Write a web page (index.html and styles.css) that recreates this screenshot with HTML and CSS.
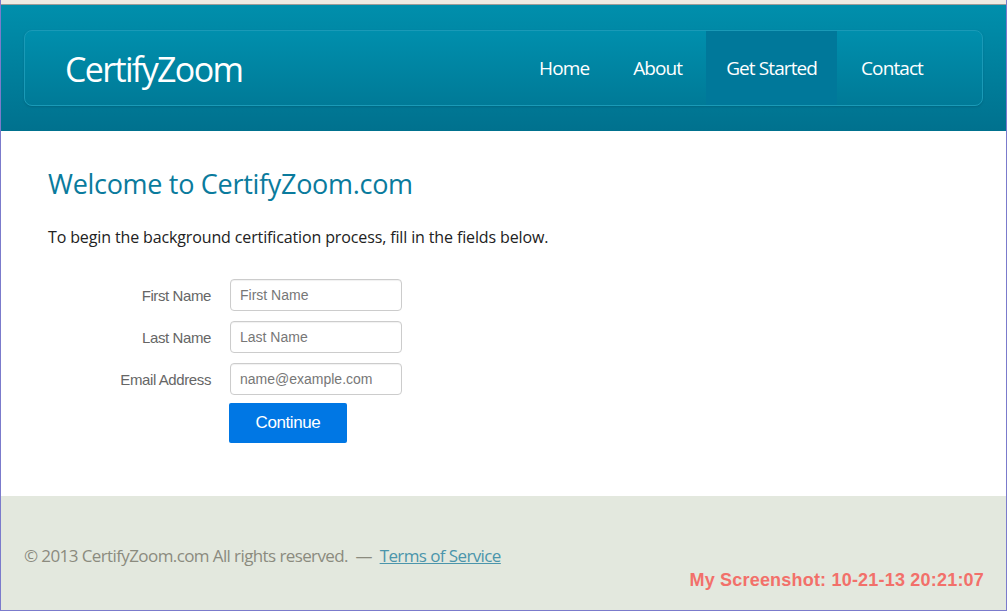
FILE: index.html
```html
<!DOCTYPE html>
<html>
<head>
<meta charset="utf-8">
<link rel="stylesheet" href="styles.css">
</head>
<body>
<div class="frame">
  <div class="topstrip"></div>
  <header class="header">
    <nav class="navbar">
      <div class="logo">CertifyZoom</div>
      <ul class="menu">
        <li><a href="#">Home</a></li>
        <li><a href="#">About</a></li>
        <li class="active"><a href="#">Get Started</a></li>
        <li><a href="#">Contact</a></li>
      </ul>
    </nav>
  </header>
  <main class="main">
    <h1 class="title">Welcome to CertifyZoom.com</h1>
    <p class="intro">To begin the background certification process, fill in the fields below.</p>
    <form class="form">
      <div class="row">
        <label class="label">First Name</label>
        <input class="field" type="text" placeholder="First Name">
      </div>
      <div class="row">
        <label class="label">Last Name</label>
        <input class="field" type="text" placeholder="Last Name">
      </div>
      <div class="row">
        <label class="label">Email Address</label>
        <input class="field" type="text" placeholder="name@example.com">
      </div>
      <div class="row">
        <span class="label"></span>
        <button class="btn" type="button">Continue</button>
      </div>
    </form>
  </main>
  <footer class="footer">
    <p class="copy">© 2013 CertifyZoom.com All rights reserved. &nbsp;—&nbsp; <a href="#">Terms of Service</a></p>
    <div class="stamp">My Screenshot: 10-21-13 20:21:07</div>
  </footer>
</div>
</body>
</html>
```
FILE: styles.css
```css
* { box-sizing: border-box; }
html, body { margin: 0; padding: 0; }
body { font-family: "Open Sans", "DejaVu Sans", sans-serif; background: #fff; }

.frame {
  width: 1007px;
  height: 611px;
  display: flex;
  flex-direction: column;
  border-left: 1px solid #7b7bcc;
  border-right: 1px solid #7b7bcc;
  border-bottom: 1px solid #7b7bcc;
  overflow: hidden;
}

.topstrip {
  height: 5px;
  flex: none;
  background: #eeebe3;
  border-bottom: 1px solid #9c9c98;
}

.header {
  flex: none;
  height: 126px;
  padding: 25px 23px;
  background: linear-gradient(#008fac, #00718e);
}

.navbar {
  height: 76px;
  display: flex;
  align-items: stretch;
  justify-content: space-between;
  border: 1px solid #1a9ab7;
  border-radius: 8px;
  background: linear-gradient(#008fad, #007a97);
  padding-left: 40px;
  padding-right: 39px;
  box-shadow: 0 1px 2px rgba(0, 60, 80, 0.25);
}

.logo {
  align-self: center;
  color: #fff;
  font-size: 34px;
  letter-spacing: -1.65px;
  line-height: 1;
  padding-top: 1px;
}

.menu {
  list-style: none;
  margin: 0;
  padding: 0;
  display: flex;
  gap: 4px;
}

.menu li { display: flex; }

.menu a {
  display: flex;
  align-items: center;
  padding: 0 20px 0;
  color: #fff;
  text-decoration: none;
  font-size: 19px;
  letter-spacing: -0.9px;
}

.menu .active a { background: #00789a; }

.main {
  flex: none;
  height: 365px;
  padding: 34px 47px 0;
}

.title {
  margin: 0;
  font-weight: normal;
  font-size: 27px;
  letter-spacing: -0.3px;
  color: #0a7b9d;
  line-height: 38px;
}

.intro {
  margin: 23px 0 0;
  font-size: 16px;
  color: #222;
  letter-spacing: -0.13px;
  line-height: 22px;
}

.form {
  margin-top: 31px;
  display: flex;
  flex-direction: column;
  gap: 10px;
}

.row {
  display: flex;
  align-items: center;
  gap: 19px;
}

.label {
  width: 163px;
  text-align: right;
  font-family: "Liberation Sans", Arial, sans-serif;
  font-size: 15px;
  letter-spacing: -0.4px;
  color: #666;
}

.field {
  width: 172px;
  height: 32px;
  border: 1px solid #ccc;
  border-radius: 4px;
  padding: 0 9px;
  font-family: "Liberation Sans", Arial, sans-serif;
  font-size: 14px;
  color: #555;
  box-shadow: inset 0 1px 1px rgba(0, 0, 0, 0.06);
}

.field::placeholder { color: #777; }

.btn {
  margin-top: -2px;
  margin-left: -1px;
  width: 118px;
  height: 40px;
  border: 0;
  border-radius: 2px;
  background: #0077e4;
  color: #fff;
  font-family: "Liberation Sans", Arial, sans-serif;
  font-size: 17px;
  letter-spacing: -0.4px;
}

.footer {
  flex: 1;
  background: #e3e8de;
  padding: 48px 22px 0 23px;
}

.copy {
  margin: 0;
  font-size: 17px;
  letter-spacing: -0.6px;
  color: #8b8b7e;
  line-height: 24px;
}

.copy a { color: #4b95ab; }

.stamp {
  text-align: right;
  margin-top: 2px;
  font-family: "Liberation Sans", Arial, sans-serif;
  font-weight: bold;
  font-size: 18px;
  letter-spacing: 0.2px;
  color: #f2706a;
}
```
